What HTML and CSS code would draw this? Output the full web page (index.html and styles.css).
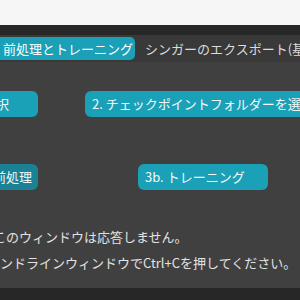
FILE: index.html
```html
<!DOCTYPE html>
<html lang="ja">
<head>
<meta charset="utf-8">
<link rel="stylesheet" href="styles.css">
</head>
<body>
<div class="page">
  <div class="topbar"></div>
  <div class="strip"></div>
  <div class="tabs">
    <div class="tab active">前処理とトレーニング</div>
    <div class="tab">シンガーのエクスポート(基本)</div>
  </div>
  <div class="content">
    <div class="row row1">
      <button class="btn btn-a">1. フォルダーを選択</button>
      <button class="btn btn-b">2. チェックポイントフォルダーを選択</button>
    </div>
    <div class="row row2">
      <button class="btn btn-c dark">3a. 前処理</button>
      <button class="btn btn-d">3b. トレーニング</button>
    </div>
    <div class="notes">
      <p class="note">このウィンドウは応答しません。</p>
      <p class="note note2">コマンドラインウィンドウでCtrl+Cを押してください。</p>
    </div>
  </div>
  <div class="footer"></div>
</div>
</body>
</html>
```
FILE: styles.css
```css
html, body {
  margin: 0;
  padding: 0;
}
body {
  width: 300px;
  height: 300px;
  overflow: hidden;
  background: #404040;
  font-family: "Noto Sans CJK JP", "Noto Sans", sans-serif;
}
.page {
  display: flex;
  flex-direction: column;
  height: 300px;
}
.topbar {
  height: 25px;
  background: #f6f6f6;
}
.strip {
  height: 10px;
  background: #272727;
}
.tabs {
  height: 27px;
  background: #393939;
  display: flex;
  align-items: center;
  white-space: nowrap;
}
.tab {
  font-size: 13px;
  line-height: 23px;
  height: 23px;
  color: #dcdcdc;
  flex-shrink: 0;
}
.tab.active {
  background: #1aa0b7;
  color: #ffffff;
  padding: 0 2px 0 3px;
  border-radius: 0 5px 5px 0;
}
.tab + .tab {
  margin-left: 10px;
}
.content {
  flex: 1;
  padding-top: 29px;
  display: flex;
  flex-direction: column;
}
.row {
  display: flex;
  height: 26px;
  white-space: nowrap;
}
.row1 {
  gap: 47px;
}
.row2 {
  margin-top: 47px;
  gap: 100px;
}
.btn {
  box-sizing: border-box;
  flex-shrink: 0;
  height: 26px;
  border: none;
  border-radius: 6px;
  background: #1aa0b7;
  color: #f4f8f9;
  font-family: inherit;
  font-size: 13px;
  line-height: 26px;
  padding: 0 8px;
  margin: 0;
  display: flex;
  align-items: center;
}
.btn.dark {
  background: #1a8294;
}
.btn-a {
  width: 200px;
  margin-left: -162px;
  justify-content: flex-end;
  padding-right: 29px;
}
.btn-b {
  padding-left: 7px;
}
.btn-c {
  width: 100px;
  margin-left: -62px;
  justify-content: flex-end;
  padding-right: 6px;
}
.btn-d {
  width: 130px;
  justify-content: flex-start;
  padding-left: 7px;
}
.notes {
  margin-top: 34px;
  display: flex;
  flex-direction: column;
}
.note {
  margin: 0;
  font-size: 13px;
  line-height: 26px;
  color: #e2e2e2;
  white-space: nowrap;
  margin-left: -7px;
}
.note2 {
  margin-left: -26px;
}
.footer {
  height: 12px;
  background: #272727;
}
```
